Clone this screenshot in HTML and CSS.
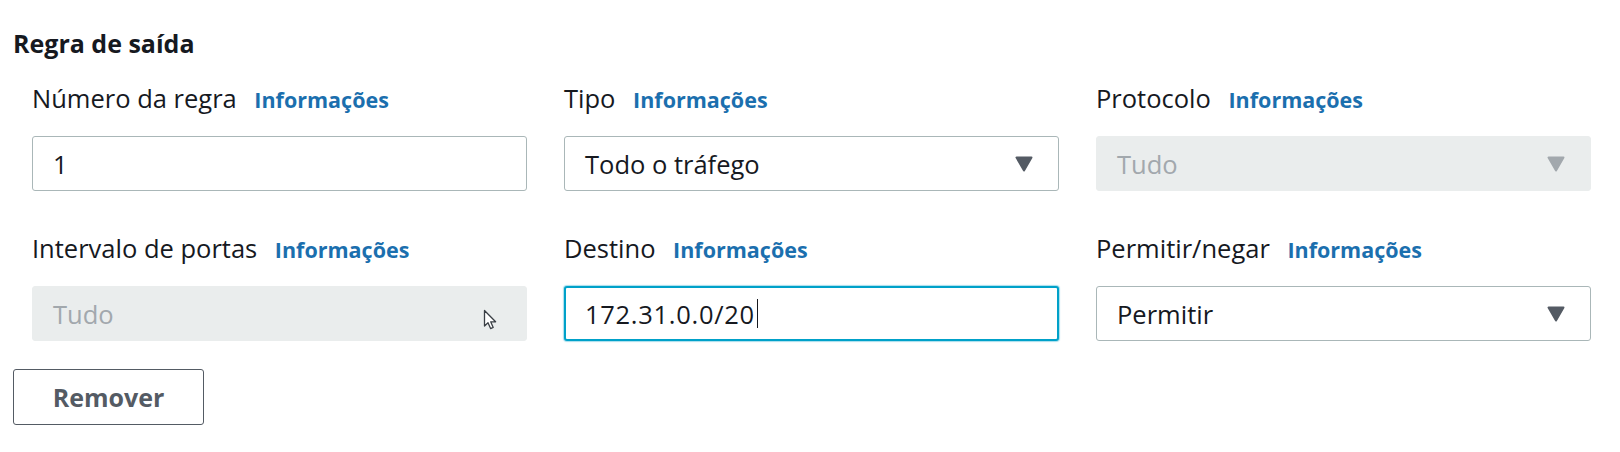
FILE: index.html
```html
<!DOCTYPE html>
<html lang="pt">
<head>
<meta charset="utf-8">
<title>Regra de saída</title>
<link rel="stylesheet" href="styles.css">
</head>
<body>
<section class="rule">
  <h2 class="rule-title">Regra de saída</h2>
  <div class="grid">
    <div class="field">
      <div class="label">Número da regra <a class="info">Informações</a></div>
      <div class="control"><span class="value">1</span></div>
    </div>
    <div class="field">
      <div class="label">Tipo <a class="info">Informações</a></div>
      <div class="control select"><span class="value">Todo o tráfego</span>
        <svg class="caret-icon" width="18" height="16" viewBox="0 0 18 16"><path d="M1.5 1.5 H16.5 L9 14.5 Z" fill="#545b64" stroke="#545b64" stroke-width="2" stroke-linejoin="round"/></svg>
      </div>
    </div>
    <div class="field">
      <div class="label">Protocolo <a class="info">Informações</a></div>
      <div class="control select disabled"><span class="value">Tudo</span>
        <svg class="caret-icon" width="18" height="16" viewBox="0 0 18 16"><path d="M1.5 1.5 H16.5 L9 14.5 Z" fill="#a2a8ad" stroke="#a2a8ad" stroke-width="2" stroke-linejoin="round"/></svg>
      </div>
    </div>
    <div class="field">
      <div class="label">Intervalo de portas <a class="info">Informações</a></div>
      <div class="control disabled"><span class="value">Tudo</span>
        <svg class="pointer" width="16" height="22" viewBox="0 0 16 22"><path d="M1.5 1.5 V17 L5 13.8 L7.6 19.6 L10.2 18.4 L7.7 12.8 H12.6 Z" fill="#ffffff" stroke="#3a3f45" stroke-width="1.3" stroke-linejoin="round"/></svg>
      </div>
    </div>
    <div class="field">
      <div class="label">Destino <a class="info">Informações</a></div>
      <div class="control focused"><span class="value ip">172.31.0.0/20</span><span class="text-caret"></span></div>
    </div>
    <div class="field">
      <div class="label">Permitir/negar <a class="info">Informações</a></div>
      <div class="control select"><span class="value">Permitir</span>
        <svg class="caret-icon" width="18" height="16" viewBox="0 0 18 16"><path d="M1.5 1.5 H16.5 L9 14.5 Z" fill="#545b64" stroke="#545b64" stroke-width="2" stroke-linejoin="round"/></svg>
      </div>
    </div>
  </div>
  <button class="btn" type="button">Remover</button>
</section>
</body>
</html>
```
FILE: styles.css
```css
html, body {
  margin: 0;
  padding: 0;
  background: #ffffff;
}
body {
  font-family: "Open Sans", "Noto Sans", sans-serif;
  color: #16191f;
}
.rule {
  padding: 25px 29px 0 13px;
}
.rule-title {
  margin: 0;
  font-size: 25px;
  line-height: 36px;
  font-weight: 700;
  color: #16191f;
}
.grid {
  margin: 22px 0 0 19px;
  display: grid;
  grid-template-columns: repeat(3, 1fr);
  column-gap: 37px;
  row-gap: 42px;
}
.field {
  display: flex;
  flex-direction: column;
  gap: 21px;
}
.label {
  font-size: 25.5px;
  line-height: 30px;
  white-space: nowrap;
}
.info {
  margin-left: 11px;
  font-weight: 700;
  font-size: 21.5px;
  color: #1b6fae;
  text-decoration: none;
}
.control {
  position: relative;
  box-sizing: border-box;
  height: 55px;
  border: 1px solid #aab7b8;
  border-radius: 3px;
  background: #ffffff;
  display: flex;
  align-items: center;
  padding: 0 20px;
  font-size: 25.5px;
  color: #16191f;
}
.control.select {
  justify-content: space-between;
  padding-right: 25px;
}
.control.disabled {
  background: #eaeded;
  border-color: #eaeded;
  color: #a2a8ad;
}
.control.focused {
  border: 2px solid #00a1c9;
  box-shadow: 0 0 1px 1px rgba(0, 161, 201, 0.35);
  padding-left: 19px;
}
.ip {
  letter-spacing: 0.7px;
}
.text-caret {
  display: inline-block;
  width: 1px;
  height: 29px;
  margin-left: 2px;
  background: #16191f;
}
.caret-icon {
  display: block;
  flex: none;
}
.pointer {
  position: absolute;
  left: 450px;
  top: 22px;
}
.btn {
  margin-top: 28px;
  box-sizing: border-box;
  height: 56px;
  width: 191px;
  border: 1px solid #545b64;
  border-radius: 3px;
  background: #ffffff;
  font-family: "Open Sans", "Noto Sans", sans-serif;
  font-size: 25px;
  font-weight: 700;
  color: #545b64;
  padding: 0;
}
```
